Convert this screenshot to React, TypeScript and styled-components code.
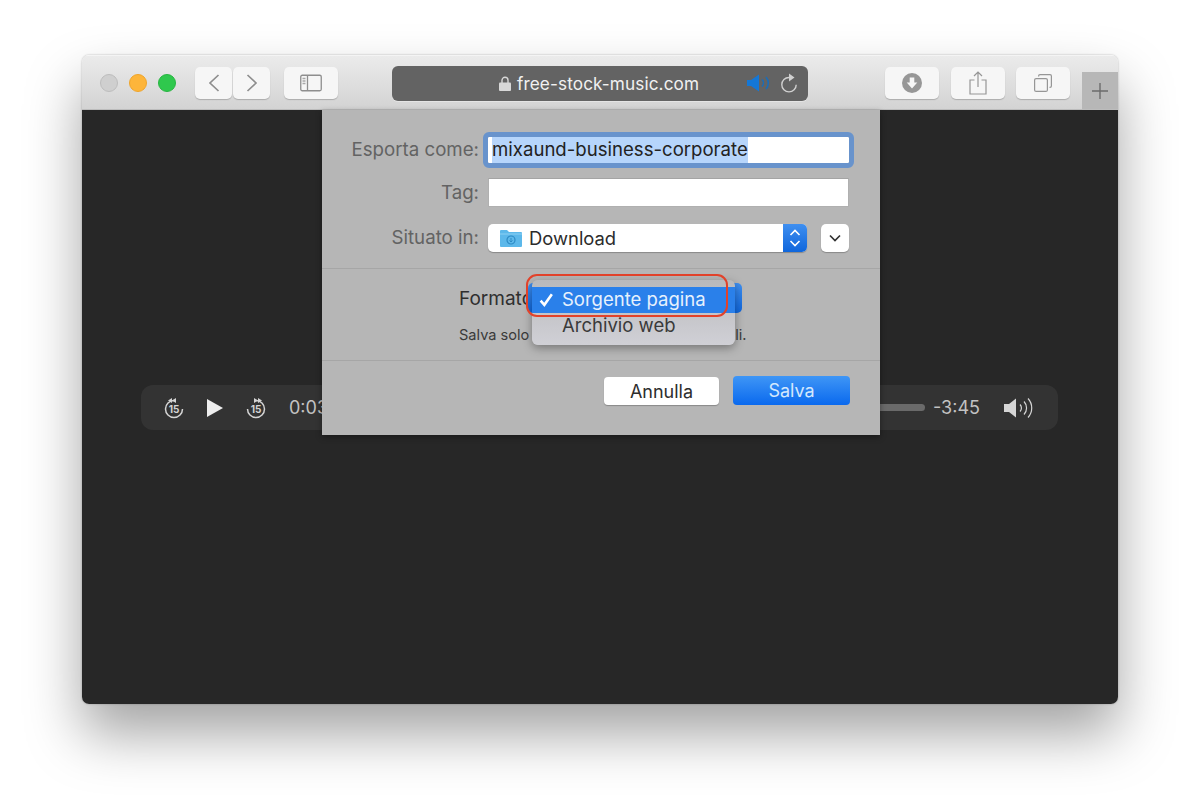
import React from 'react';
import styled, { createGlobalStyle } from 'styled-components';

const GlobalStyle = createGlobalStyle`
  html, body {
    margin: 0;
    background: #fff;
    font-family: Inter, "Liberation Sans", sans-serif;
  }
`;

const Page = styled.div`
  width: 1200px;
  height: 812px;
  padding: 55px 82px 0;
  box-sizing: border-box;
  overflow: hidden;
`;

const Window = styled.div`
  width: 1036px;
  height: 649px;
  border-radius: 7px;
  overflow: hidden;
  display: flex;
  flex-direction: column;
`;

const WindowShadow = styled.div`
  width: 1036px;
  height: 649px;
  border-radius: 7px;
  box-shadow: 0 30px 55px rgba(0, 0, 0, 0.36), 0 0 2px rgba(0, 0, 0, 0.3);
`;

const Toolbar = styled.header`
  height: 55px;
  flex: none;
  box-sizing: border-box;
  display: flex;
  align-items: center;
  padding: 1px 0 0 18px;
  background: linear-gradient(#ebebeb, #d3d3d3);
  border-top: 1px solid #f4f4f4;
  border-bottom: 1px solid #bcbcbc;
`;

const Light = styled.span<{ $color: string; $edge: string }>`
  width: 18px;
  height: 18px;
  margin-right: 11px;
  border-radius: 50%;
  box-sizing: border-box;
  background: ${(p) => p.$color};
  border: 1px solid ${(p) => p.$edge};
`;

const ToolButton = styled.button<{ $w?: number; $ml?: number }>`
  width: ${(p) => p.$w ?? 54}px;
  height: 32px;
  margin-left: ${(p) => p.$ml ?? 0}px;
  padding: 0;
  display: flex;
  align-items: center;
  justify-content: center;
  flex: none;
  background: #f6f6f6;
  border: none;
  border-radius: 5px;
  box-shadow: 0 1px 1px rgba(0, 0, 0, 0.2);
`;

const UrlBar = styled.div`
  width: 416px;
  height: 35px;
  margin-left: 54px;
  flex: none;
  box-sizing: border-box;
  display: flex;
  align-items: center;
  padding: 0 10px 0 107px;
  background: #636363;
  border-radius: 6px;
  box-shadow: 0 1px 0 rgba(255, 255, 255, 0.35);
  color: #f1f1f1;
  font-size: 17.2px;
  letter-spacing: 0.1px;
`;

const UrlText = styled.span`
  margin-left: 6px;
`;

const UrlIcons = styled.div`
  margin-left: auto;
  display: flex;
  align-items: center;
  gap: 8px;
`;

const NewTab = styled.div`
  width: 36px;
  height: 37px;
  margin-left: 12px;
  align-self: flex-end;
  display: flex;
  align-items: center;
  justify-content: center;
  background: #b7b7b7;
`;

const Content = styled.main`
  position: relative;
  flex: 1;
  box-sizing: border-box;
  padding: 275px 60px 0 59px;
  background: #272727;
`;

const Player = styled.div`
  height: 45px;
  box-sizing: border-box;
  display: flex;
  align-items: center;
  padding: 0 24px 0 22px;
  background: #333333;
  border-radius: 12px;
  color: #c2c2c2;
  font-size: 18px;
`;

const PlayerTime = styled.span<{ $ml: number }>`
  margin-left: ${(p) => p.$ml}px;
  flex: none;
`;

const Track = styled.div`
  flex: 1;
  height: 7px;
  margin-left: 12px;
  border-radius: 4px;
  background: #6a6a6a;
`;

const PlayerIcon = styled.svg<{ $ml?: number }>`
  margin-left: ${(p) => p.$ml ?? 0}px;
  flex: none;
  display: block;
`;

const Sheet = styled.section`
  position: absolute;
  left: 240px;
  top: 0;
  width: 558px;
  height: 325px;
  background: #b6b6b6;
  color: #5f5f5f;
  box-shadow: 0 2px 6px rgba(0, 0, 0, 0.4);
`;

const SheetTop = styled.div`
  height: 159px;
  box-sizing: border-box;
  padding-top: 27px;
  border-bottom: 1px solid #a6a6a6;
  display: flex;
  flex-direction: column;
`;

const FieldRow = styled.div<{ $h: number; $mt?: number }>`
  height: ${(p) => p.$h}px;
  margin-top: ${(p) => p.$mt ?? 0}px;
  display: flex;
  align-items: center;
`;

const FieldLabel = styled.label`
  width: 157px;
  margin-right: 9px;
  flex: none;
  text-align: right;
  font-size: 18.7px;
  line-height: 24px;
  color: #636363;
`;

const FocusInput = styled.div`
  width: 361px;
  height: 26px;
  display: flex;
  align-items: flex-start;
  padding-left: 4px;
  box-sizing: border-box;
  background: #fff;
  outline: 5px solid #6893cc;
  border-radius: 1px;
  font-size: 18.6px;
  color: #222;
`;

const Selected = styled.span`
  background: #b6d5fb;
  line-height: 24px;
  height: 26px;
`;

const PlainInput = styled.div`
  width: 361px;
  height: 29px;
  box-sizing: border-box;
  background: #fff;
  border: 1px solid #b0b0b0;
  border-top-color: #a4a4a4;
`;

const Select = styled.div`
  width: 319px;
  height: 28px;
  display: flex;
  align-items: center;
  padding-left: 12px;
  box-sizing: border-box;
  background: #fff;
  border-radius: 5px;
  box-shadow: 0 1px 1px rgba(0, 0, 0, 0.25);
  font-size: 18.4px;
  color: #2c2c2c;
  overflow: hidden;
`;

const SelectText = styled.span`
  margin-left: 7px;
`;

const Stepper = styled.span`
  width: 24px;
  height: 28px;
  margin-left: auto;
  display: flex;
  align-items: center;
  justify-content: center;
  background: linear-gradient(#3f8ff0, #0f66dc);
`;

const ChevronButton = styled.span`
  width: 28px;
  height: 28px;
  margin-left: 14px;
  display: flex;
  align-items: center;
  justify-content: center;
  background: #fff;
  border-radius: 5px;
  box-shadow: 0 1px 1px rgba(0, 0, 0, 0.25);
`;

const SheetMiddle = styled.div`
  position: relative;
  height: 92px;
  box-sizing: border-box;
  padding: 14px 0 0 137px;
  border-bottom: 1px solid #a6a6a6;
  color: #2f2f2f;
`;

const FormatRow = styled.div`
  height: 30px;
  display: flex;
  align-items: center;
  font-size: 19px;
`;

const FormatPopup = styled.div`
  width: 214px;
  height: 30px;
  margin-left: -5px;
  border-radius: 5px;
  background: linear-gradient(#3f8ff0, #0f66dc);
`;

const Hint = styled.p`
  margin: 13px 0 0;
  font-size: 14.6px;
  line-height: 18px;
  white-space: nowrap;
  color: #3a3a3a;
`;

const Menu = styled.ul`
  position: absolute;
  left: 210px;
  top: 11px;
  width: 203px;
  height: 65px;
  margin: 0;
  padding: 7px 0 0;
  box-sizing: border-box;
  list-style: none;
  background: linear-gradient(#b9b9bb, #d0d0d6);
  border-radius: 6px;
  box-shadow: 0 3px 10px rgba(0, 0, 0, 0.35);
  font-size: 18.5px;
`;

const MenuItem = styled.li<{ $active?: boolean }>`
  height: 26px;
  box-sizing: border-box;
  padding: 0 0 2px 30px;
  display: flex;
  align-items: center;
  position: relative;
  background: ${(p) => (p.$active ? '#2a80ea' : 'transparent')};
  color: ${(p) => (p.$active ? '#e6f1fd' : '#3a3a3a')};
`;

const Check = styled.svg`
  position: absolute;
  left: 7px;
  top: 5px;
`;

const Highlight = styled.div`
  position: absolute;
  left: 204px;
  top: 5px;
  width: 202px;
  height: 43px;
  box-sizing: border-box;
  border: 2px solid #e2422a;
  border-radius: 11px;
`;

const SheetActions = styled.div`
  display: flex;
  justify-content: flex-end;
  align-items: flex-start;
  gap: 14px;
  padding: 15px 30px 0 0;
`;

const CancelButton = styled.button`
  width: 115px;
  height: 28px;
  margin-top: 1px;
  padding: 0;
  border: none;
  border-radius: 4px;
  background: #fff;
  box-shadow: 0 1px 1px rgba(0, 0, 0, 0.25);
  color: #2d2d2d;
  font: 18px Inter, "Liberation Sans", sans-serif;
`;

const SaveButton = styled.button`
  width: 117px;
  height: 29px;
  padding: 0;
  border: none;
  border-radius: 4px;
  background: linear-gradient(#3f96f6, #0a69ee);
  color: #d4e8fd;
  font: 18px Inter, "Liberation Sans", sans-serif;
`;

const Skip = ({ ml, flip }: { ml?: number; flip?: boolean }) => (
  <PlayerIcon $ml={ml} width="22" height="22" viewBox="0 0 22 22" fill="none">
    <path
      d="M11 3.5a8.5 8.5 0 1 0 8.5 8.5"
      stroke="#d4d4d4"
      strokeWidth="1.5"
      transform={flip ? 'matrix(-1 0 0 1 22 0)' : undefined}
    />
    {flip ? (
      <path d="M9 1l4 2.5-4 2.5zM13 1l4 2.5-4 2.5z" fill="#d4d4d4" />
    ) : (
      <path d="M13 1L9 3.5 13 6zM9 1L5 3.5 9 6z" fill="#d4d4d4" />
    )}
    <text x="11" y="16" textAnchor="middle" fontSize="10" fontWeight="700" fill="#d4d4d4" fontFamily="Inter, sans-serif">
      15
    </text>
  </PlayerIcon>
);

export default function App() {
  return (
    <>
      <GlobalStyle />
      <Page>
        <WindowShadow>
          <Window>
            <Toolbar>
              <Light $color="#cfcfcf" $edge="#bdbdbd" />
              <Light $color="#fdb53a" $edge="#efa52b" />
              <Light $color="#2fc84d" $edge="#27b541" />
              <ToolButton $w={37} $ml={8}>
                <svg width="14" height="20" viewBox="0 0 14 20" fill="none">
                  <path d="M11.5 2L3 10l8.5 8" stroke="#8e8e8e" strokeWidth="1.7" />
                </svg>
              </ToolButton>
              <ToolButton $w={37} $ml={1}>
                <svg width="14" height="20" viewBox="0 0 14 20" fill="none">
                  <path d="M2.5 2L11 10l-8.5 8" stroke="#8e8e8e" strokeWidth="1.7" />
                </svg>
              </ToolButton>
              <ToolButton $ml={14}>
                <svg width="22" height="18" viewBox="0 0 22 18" fill="none">
                  <rect x="0.75" y="1.25" width="20.5" height="15.5" rx="1.5" stroke="#8e8e8e" strokeWidth="1.3" />
                  <path d="M7.5 1.5v15" stroke="#8e8e8e" strokeWidth="1.3" />
                  <path d="M2.5 4.5h3M2.5 7h3M2.5 9.5h3" stroke="#a8a8a8" strokeWidth="1.3" />
                </svg>
              </ToolButton>
              <UrlBar>
                <svg width="12" height="15" viewBox="0 0 12 15" fill="none">
                  <path d="M3 7V4.3a3 3 0 0 1 6 0V7" stroke="#d8d8d8" strokeWidth="1.4" />
                  <rect y="6.5" width="12" height="8.5" rx="1" fill="#d8d8d8" />
                </svg>
                <UrlText>free-stock-music.com</UrlText>
                <UrlIcons>
                  <svg width="25" height="18" viewBox="0 0 25 18" fill="none">
                    <path d="M0 6h4l8-5.5v17L4 12H0z" fill="#1477d6" />
                    <path d="M15 5.5a5 5 0 0 1 0 7M19 3a9 9 0 0 1 0 12" stroke="#1a6db9" strokeWidth="1.6" />
                  </svg>
                  <svg width="18" height="20" viewBox="0 0 18 20" fill="none">
                    <path d="M9 4.5a7.2 7.2 0 1 0 7.2 7.2" stroke="#d0d0d0" strokeWidth="1.4" />
                    <path d="M9 0.5l5.5 4-5.5 4z" fill="#d0d0d0" />
                  </svg>
                </UrlIcons>
              </UrlBar>
              <ToolButton $ml={77}>
                <svg width="20" height="20" viewBox="0 0 20 20">
                  <circle cx="10" cy="10" r="10" fill="#979797" />
                  <path d="M7.7 4.5h4.6v5h3L10 15.5 4.7 9.5h3z" fill="#f6f6f6" />
                </svg>
              </ToolButton>
              <ToolButton $ml={12}>
                <svg width="18" height="24" viewBox="0 0 18 24" fill="none">
                  <path d="M5.5 9H1v14h16V9h-4.5" stroke="#969696" strokeWidth="1.2" />
                  <path d="M9 16V1.5M5 5l4-4 4 4" stroke="#969696" strokeWidth="1.2" />
                </svg>
              </ToolButton>
              <ToolButton $ml={11}>
                <svg width="18" height="18" viewBox="0 0 18 18" fill="none">
                  <rect x="0.6" y="4.6" width="12.8" height="12.8" rx="1.5" stroke="#969696" strokeWidth="1.2" />
                  <path d="M4.6 2.5V2A1.4 1.4 0 0 1 6 .6h10A1.4 1.4 0 0 1 17.4 2v10a1.4 1.4 0 0 1-1.4 1.4h-.5" stroke="#969696" strokeWidth="1.2" />
                </svg>
              </ToolButton>
              <NewTab>
                <svg width="16" height="16" viewBox="0 0 16 16" fill="none">
                  <path d="M8 0v16M0 8h16" stroke="#6c6c6c" strokeWidth="1.4" />
                </svg>
              </NewTab>
            </Toolbar>
            <Content>
              <Player>
                <Skip />
                <PlayerIcon $ml={21} width="18" height="20" viewBox="0 0 18 20">
                  <path d="M1 1l16 9-16 9z" fill="#eeeeee" />
                </PlayerIcon>
                <Skip ml={21} flip />
                <PlayerTime $ml={22}>0:03</PlayerTime>
                <Track />
                <PlayerTime $ml={8}>-3:45</PlayerTime>
                <PlayerIcon $ml={23} width="31" height="22" viewBox="0 0 31 22" fill="none">
                  <path d="M1 7h5l7-5.5v19L6 15H1z" fill="#d6d6d6" />
                  <path d="M17 7.5a5 5 0 0 1 0 7M21 4.5a9.5 9.5 0 0 1 0 13M25 1.5a14 14 0 0 1 0 19" stroke="#d6d6d6" strokeWidth="1.2" />
                </PlayerIcon>
              </Player>
              <Sheet>
                <SheetTop>
                  <FieldRow $h={26}>
                    <FieldLabel>Esporta come:</FieldLabel>
                    <FocusInput>
                      <Selected>mixaund-business-corporate</Selected>
                    </FocusInput>
                  </FieldRow>
                  <FieldRow $h={29} $mt={15}>
                    <FieldLabel>Tag:</FieldLabel>
                    <PlainInput />
                  </FieldRow>
                  <FieldRow $h={28} $mt={17}>
                    <FieldLabel>Situato in:</FieldLabel>
                    <Select>
                      <svg width="22" height="18" viewBox="0 0 22 18">
                        <path d="M0 2a1 1 0 0 1 1-1h6l2 2h12a1 1 0 0 1 1 1v13a1 1 0 0 1-1 1H1a1 1 0 0 1-1-1z" fill="#5cb8ea" />
                        <path d="M0 5h22" stroke="#8bd0f3" strokeWidth="1" />
                        <circle cx="11" cy="11" r="4" fill="none" stroke="#2c8ac4" strokeWidth="1.2" />
                        <path d="M11 9v3.5M9.5 11.5l1.5 1.5 1.5-1.5" stroke="#2c8ac4" fill="none" strokeWidth="1" />
                      </svg>
                      <SelectText>Download</SelectText>
                      <Stepper>
                        <svg width="12" height="20" viewBox="0 0 12 20" fill="none">
                          <path d="M1.5 7L6 2.5 10.5 7M1.5 13L6 17.5l4.5-4.5" stroke="#fff" strokeWidth="1.6" />
                        </svg>
                      </Stepper>
                    </Select>
                    <ChevronButton>
                      <svg width="12" height="8" viewBox="0 0 12 8" fill="none">
                        <path d="M1 1.5l5 5 5-5" stroke="#333" strokeWidth="1.7" />
                      </svg>
                    </ChevronButton>
                  </FieldRow>
                </SheetTop>
                <SheetMiddle>
                  <FormatRow>
                    Formato
                    <FormatPopup />
                  </FormatRow>
                  <Hint>Salva solo il sorgente dei frame principali.</Hint>
                  <Menu>
                    <MenuItem $active>
                      <Check width="15" height="15" viewBox="0 0 14 14" fill="none">
                        <path d="M1.5 8l3.5 4 7-10" stroke="#fff" strokeWidth="2.4" />
                      </Check>
                      Sorgente pagina
                    </MenuItem>
                    <MenuItem>Archivio web</MenuItem>
                  </Menu>
                  <Highlight />
                </SheetMiddle>
                <SheetActions>
                  <CancelButton>Annulla</CancelButton>
                  <SaveButton>Salva</SaveButton>
                </SheetActions>
              </Sheet>
            </Content>
          </Window>
        </WindowShadow>
      </Page>
    </>
  );
}
